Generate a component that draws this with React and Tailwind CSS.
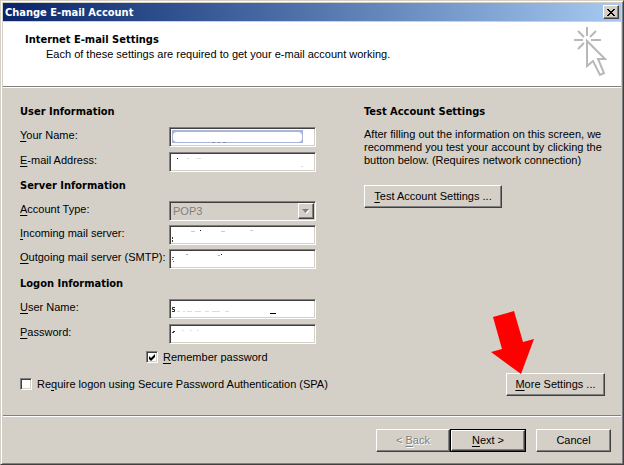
import React from 'react'
import clsx from 'clsx'

const raised = 'border border-t-white border-l-white border-r-[#404040] border-b-[#404040] shadow-[inset_-1px_-1px_0_#808080] bg-[#d4d0c8]'
const sunken = 'border border-t-[#808080] border-l-[#808080] border-r-white border-b-white shadow-[inset_1px_1px_0_#404040,inset_-1px_-1px_0_#d4d0c8]'

const Key = ({ children }) => (
  <span className="underline underline-offset-2">{children}</span>
)

const Button = ({ className, children, ...props }) => (
  <button type="button" className={clsx('h-[23px] whitespace-nowrap', raised, className)} {...props}>
    {children}
  </button>
)

const Heading = ({ children }) => (
  <h2 className="h-4 font-['DejaVu_Sans_Condensed',sans-serif] font-bold leading-[18px]">{children}</h2>
)

const Row = ({ id, label, children }) => (
  <div className="flex h-5 items-start">
    <label htmlFor={id} className="w-[149px] shrink-0 whitespace-nowrap leading-4">{label}</label>
    <div className="relative h-5 flex-1">{children}</div>
  </div>
)

// children are the leftover marks drawn inside the wiped field
const Field = ({ id, label, type = 'text', children }) => (
  <Row id={id} label={label}>
    <input id={id} type={type} className={clsx('block h-5 w-full bg-white px-1 outline-none', sunken)} />
    <svg className="pointer-events-none absolute inset-0" width="147" height="20" viewBox="0 0 147 20" fill="none" aria-hidden="true">
      {children}
    </svg>
  </Row>
)

const Check = ({ id, defaultChecked, children }) => (
  <div className="flex h-[14px] items-center gap-[5px]">
    <span className="relative block size-3">
      <input id={id} type="checkbox" defaultChecked={defaultChecked} className={clsx('peer block size-3 appearance-none bg-white', sunken)} />
      <svg className="pointer-events-none absolute inset-0 hidden peer-checked:block" width="12" height="12" viewBox="0 0 12 12" aria-hidden="true">
        <path d="M3 5L5 7L9 3V6L5 10L3 8Z" fill="#000" />
      </svg>
    </span>
    <label htmlFor={id} className="whitespace-nowrap">{children}</label>
  </div>
)

const TitleBar = () => (
  <div className="flex h-[18px] items-center justify-between bg-linear-to-r from-[#0a246a] to-[#a6caf0] pr-[2px] pl-[2px]">
    <h1 className="font-['DejaVu_Sans_Condensed',sans-serif] font-bold text-white">Change E-mail Account</h1>
    <button type="button" aria-label="Close" className={clsx('flex h-[14px] w-4 items-center justify-center', raised)}>
      <svg width="8" height="7" viewBox="0 0 8 7" shapeRendering="crispEdges" aria-hidden="true">
        <path d="M0 0h2v1h1v1h2v-1h1v-1h2v1h-1v1h-1v1h-1v1h1v1h1v1h1v1h-2v-1h-1v-1h-2v1h-1v1h-2v-1h1v-1h1v-1h1v-1h-1v-1h-1v-1h-1z" fill="#000" />
      </svg>
    </button>
  </div>
)

const Header = () => (
  <div className="mt-px flex justify-between border-b border-[#808080] bg-white pl-[22px] pr-[14px]">
    <div className="pt-[9px]">
      <Heading>Internet E-mail Settings</Heading>
      <p className="pl-[21px] leading-[14px]">Each of these settings are required to get your e-mail account working.</p>
    </div>
    <svg width="34" height="64" viewBox="0 0 34 64" fill="none" stroke="#b8b8b8" strokeWidth="2" aria-hidden="true">
      <path d="M14 5V14M1 18H10M18 18H28M5 9L11 15M23 9L17 15M5 27L11 21" />
      <path d="M14 19V44L20 39L27 53L31 51L25 37H32Z" />
    </svg>
  </div>
)

const App = () => {
  return (
    <div className="flex min-h-screen flex-col border border-t-[#d4d0c8] border-l-[#d4d0c8] border-r-[#404040] border-b-[#404040] bg-[#d4d0c8] p-[2px] font-['Liberation_Sans',sans-serif] text-[11px] leading-[13px] text-black shadow-[inset_1px_1px_0_#fff,inset_-1px_-1px_0_#808080]">
      <TitleBar />
      <Header />

      <main className="flex flex-1 justify-between border-t border-white pt-[15px] pr-4 pb-[19px] pl-[17px]">
        <form className="w-[296px] shrink-0">
          <Heading>User Information</Heading>
          <div className="mt-2 flex flex-col gap-[5px]">
            <Field id="name" label={<><Key>Y</Key>our Name:</>}>
              <rect x="3" y="3" width="131" height="13" fill="#a9b4da" />
              <rect x="4" y="5" width="129" height="10" rx="4" fill="#fff" />
              <path d="M43 15.5h3M49 15.5h2M54 15.5h3" stroke="#889" />
            </Field>
            <Field id="email" label={<><Key>E</Key>-mail Address:</>}>
              <path d="M8 6.500h1" stroke="#222" />
              <path d="M18 6.500h2M28 6.500h4M132 14.500h2" stroke="#ddd" />
            </Field>
          </div>

          <div className="mt-[5px]">
            <Heading>Server Information</Heading>
          </div>
          <div className="mt-2 flex flex-col gap-1">
            <Row id="type" label={<><Key>A</Key>ccount Type:</>}>
              <select id="type" disabled className={clsx('block h-5 w-full appearance-none bg-[#d4d0c8] pl-[3px] text-[#808080] opacity-100', sunken)}>
                <option>POP3</option>
              </select>
              <span className={clsx('pointer-events-none absolute top-[2px] right-[2px] flex h-4 w-4 items-center justify-center', raised)}>
                <svg width="8" height="5" viewBox="0 0 8 5" aria-hidden="true">
                  <path d="M1 1h7L4.500 5z" fill="#fff" />
                  <path d="M0 0h7L3.500 4z" fill="#808080" />
                </svg>
              </span>
            </Row>
            <Field id="incoming" label={<><Key>I</Key>ncoming mail server:</>}>
              <path d="M3.500 12v2M3.500 15v2" stroke="#533" />
              <path d="M22 6.500h4M52 6.500h4M81 5.500h3" stroke="#ccc" />
              <path d="M31 5.500h1" stroke="#222" />
            </Field>
            <Field id="outgoing" label={<><Key>O</Key>utgoing mail server (SMTP):</>}>
              <path d="M3 8.500h2M3 10.500h1M4 12.500h1" stroke="#943" />
              <path d="M17 5.500h2M49 6.500h2" stroke="#aaa" />
              <path d="M52 5.500h1" stroke="#222" />
            </Field>
          </div>

          <div className="mt-[6px]">
            <Heading>Logon Information</Heading>
          </div>
          <div className="mt-2 flex flex-col gap-[5px]">
            <Field id="user" label={<><Key>U</Key>ser Name:</>}>
              <path d="M6 8.500H3.500V10.500H5.500V12.500H3" stroke="#322" />
              <path d="M8 12.500h3M14 12.500h2M18 12.500h5M26 12.500h6M36 12.500h4M43 12.500h8M56 12.500h4" stroke="#ddd" />
              <path d="M101 14.500h6" stroke="#000" />
            </Field>
            <Field id="password" type="password" label={<><Key>P</Key>assword:</>}>
              <path d="M4 7.500h2M3 8.500h2" stroke="#433" />
              <path d="M13 6.500h2M21 6.500h2M28 6.500h2" stroke="#e2e2e2" />
            </Field>
          </div>

          <div className="mt-[6px] pl-[126px]">
            <Check id="remember" defaultChecked><Key>R</Key>emember password</Check>
          </div>
          <div className="mt-[13px]">
            <Check id="spa">Re<Key>q</Key>uire logon using Secure Password Authentication (SPA)</Check>
          </div>
        </form>

        <section className="flex w-[241px] flex-col">
          <Heading>Test Account Settings</Heading>
          <p className="mt-[9px]">
            After filling out the information on this screen, we recommend you test your account by clicking the button below. (Requires network connection)
          </p>
          <Button className="mt-[18px] w-[138px] self-start"><Key>T</Key>est Account Settings ...</Button>
          <div className="relative mt-auto self-end">
            <Button className="w-[99px]"><Key>M</Key>ore Settings ...</Button>
            <svg className="pointer-events-none absolute -top-[62px] -left-[15px]" width="44" height="64" viewBox="0 0 44 64" aria-hidden="true">
              <path d="M2 6L23 0L32 31L43 28L30 63L0 41L11 38Z" fill="#f00" />
            </svg>
          </div>
        </section>
      </main>

      <footer className="flex justify-end border-t border-[#808080] pt-[13px] pr-[10px] pb-[10px] shadow-[inset_0_1px_0_#fff]">
        <Button disabled className="w-[74px] text-[#808080] [text-shadow:1px_1px_0_#fff]">&lt; <Key>B</Key>ack</Button>
        <div className="border border-black">
          <Button className="!h-[21px] w-[74px]"><Key>N</Key>ext &gt;</Button>
        </div>
        <Button className="ml-[10px] w-[75px]">Cancel</Button>
      </footer>
    </div>
  )
}

export default App
